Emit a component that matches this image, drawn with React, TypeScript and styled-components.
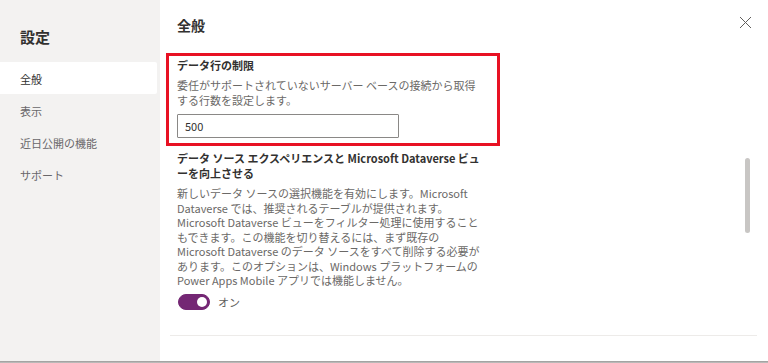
import React, { useState } from 'react'
import styled, { createGlobalStyle } from 'styled-components';

const GlobalStyle = createGlobalStyle`
    html, body {
        margin: 0;
        padding: 0;
        background: #ffffff;
    }
    body {
        font-family: "Noto Sans CJK JP", "Noto Sans", sans-serif;
        color: #323130;
    }
`;

const Frame = styled.div`
    width: 768px;
    height: 363px;
    display: flex;
    flex-direction: column;
    overflow: hidden;
`;

const Body = styled.div`
    flex: 1;
    display: flex;
    flex-direction: row;
    min-height: 0;
`;

const BottomEdge = styled.div`
    height: 2px;
    background: linear-gradient(#9a9998, #c4c3c2);
`;

const Sidebar = styled.nav`
    width: 160px;
    flex-shrink: 0;
    background-color: #f3f2f1;
    display: flex;
    flex-direction: column;
`;

const SidebarTitle = styled.h1`
    margin: 0;
    padding: 27px 0 0 20px;
    height: 35px;
    font-size: 15px;
    line-height: 20px;
    font-weight: 700;
    color: #323130;
`;

const NavItem = styled.div<{ $active?: boolean }>`
    width: 157px;
    height: 32px;
    box-sizing: border-box;
    padding-left: 20px;
    display: flex;
    align-items: center;
    padding-top: 1px;
    font-size: 11px;
    color: ${p => p.$active ? '#323130' : '#69676a'};
    background-color: ${p => p.$active ? '#ffffff' : 'transparent'};
    border-radius: 0 2px 2px 0;
`;

const Main = styled.section`
    flex: 1;
    position: relative;
    display: flex;
    flex-direction: column;
    background: #ffffff;
`;

const Header = styled.div`
    display: flex;
    flex-direction: row;
    align-items: center;
    justify-content: space-between;
    padding: 15px 14px 0 17px;
    height: 20px;
    margin-bottom: 18px;
`;

const PageTitle = styled.h2`
    margin: 0;
    font-size: 14px;
    line-height: 20px;
    font-weight: 700;
    color: #323130;
`;

const CloseButton = styled.button`
    width: 18px;
    height: 18px;
    margin-top: -6px;
    padding: 0;
    border: none;
    background: none;
    display: flex;
    align-items: center;
    justify-content: center;
    cursor: pointer;
`;

const Content = styled.div`
    padding: 0 0 0 17px;
    display: flex;
    flex-direction: column;
`;

const Setting = styled.div<{ $highlighted?: boolean }>`
    display: flex;
    flex-direction: column;
    ${p => p.$highlighted ? `
        width: 334px;
        box-sizing: border-box;
        margin-left: -11px;
        padding: 2px 8px 5px 8px;
        border: 3px solid #e81123;
    ` : `
        padding-top: 5px;
    `}
`;

const SettingLabel = styled.div`
    font-size: 11px;
    line-height: 15px;
    font-weight: 700;
    color: #323130;
    white-space: nowrap;
`;

const SettingDescription = styled.p`
    margin: 5px 0 0 0;
    font-size: 11px;
    line-height: 14.5px;
    color: #6b6967;
    white-space: nowrap;
`;

const NumberInput = styled.input`
    margin-top: 7px;
    width: 222px;
    height: 24px;
    box-sizing: border-box;
    border: 1px solid #8a8886;
    border-radius: 1px;
    padding: 0 7px;
    font-family: inherit;
    font-size: 11px;
    color: #323130;
    outline: none;
`;

const ToggleRow = styled.label`
    margin-top: 6px;
    display: flex;
    flex-direction: row;
    align-items: center;
    gap: 8px;
    font-size: 11px;
    color: #605e5c;
    cursor: pointer;
`;

const ToggleTrack = styled.span<{ $on: boolean }>`
    width: 32px;
    height: 16px;
    margin-left: 1px;
    box-sizing: border-box;
    border-radius: 8px;
    background-color: ${p => p.$on ? '#742774' : '#ffffff'};
    border: 1px solid ${p => p.$on ? '#742774' : '#605e5c'};
    display: flex;
    align-items: center;
    justify-content: ${p => p.$on ? 'flex-end' : 'flex-start'};
    padding: 0 2px;
`;

const ToggleKnob = styled.span<{ $on: boolean }>`
    width: 10px;
    height: 10px;
    border-radius: 50%;
    background-color: ${p => p.$on ? '#ffffff' : '#605e5c'};
`;

const Divider = styled.hr`
    margin: 25px 11px 0 10px;
    border: none;
    border-top: 1px solid #edebe9;
`;

// カスタムスクロールバーのつまみ（コンテンツの上に重なる）
const ScrollThumb = styled.div`
    position: absolute;
    left: 585px;
    top: 158px;
    width: 5px;
    height: 75px;
    border-radius: 3px;
    background-color: #c8c6c4;
`;

const navItems = ['全般', '表示', '近日公開の機能', 'サポート'];

const App: React.FC = () => {
    const [rowLimit, setRowLimit] = useState<string>('500');
    const [enabled, setEnabled] = useState<boolean>(true);

    return (
        <Frame>
            <GlobalStyle />
            <Body>
                <Sidebar>
                    <SidebarTitle>設定</SidebarTitle>
                    {navItems.map((item, i) =>
                        <NavItem key={item} $active={i === 0}>{item}</NavItem>
                    )}
                </Sidebar>
                <Main>
                    <Header>
                        <PageTitle>全般</PageTitle>
                        <CloseButton aria-label="閉じる">
                            <svg width="13" height="13" viewBox="0 0 13 13">
                                <path d="M1 1 L12 12 M12 1 L1 12" stroke="#605e5c" strokeWidth="1" fill="none" />
                            </svg>
                        </CloseButton>
                    </Header>
                    <Content>
                        <Setting $highlighted>
                            <SettingLabel>データ行の制限</SettingLabel>
                            <SettingDescription>
                                委任がサポートされていないサーバー ベースの接続から取得<br />
                                する行数を設定します。
                            </SettingDescription>
                            <NumberInput value={rowLimit} onChange={e => setRowLimit(e.target.value)} />
                        </Setting>
                        <Setting>
                            <SettingLabel>
                                データ ソース エクスペリエンスと Microsoft Dataverse ビュ<br />
                                ーを向上させる
                            </SettingLabel>
                            <SettingDescription>
                                新しいデータ ソースの選択機能を有効にします。Microsoft<br />
                                Dataverse では、推奨されるテーブルが提供されます。<br />
                                Microsoft Dataverse ビューをフィルター処理に使用すること<br />
                                もできます。この機能を切り替えるには、まず既存の<br />
                                Microsoft Dataverse のデータ ソースをすべて削除する必要が<br />
                                あります。このオプションは、Windows プラットフォームの<br />
                                Power Apps Mobile アプリでは機能しません。
                            </SettingDescription>
                            <ToggleRow onClick={() => setEnabled(!enabled)}>
                                <ToggleTrack $on={enabled}>
                                    <ToggleKnob $on={enabled} />
                                </ToggleTrack>
                                {enabled ? 'オン' : 'オフ'}
                            </ToggleRow>
                        </Setting>
                    </Content>
                    <Divider />
                    <ScrollThumb />
                </Main>
            </Body>
            <BottomEdge />
        </Frame>
    );
}

export default App;
